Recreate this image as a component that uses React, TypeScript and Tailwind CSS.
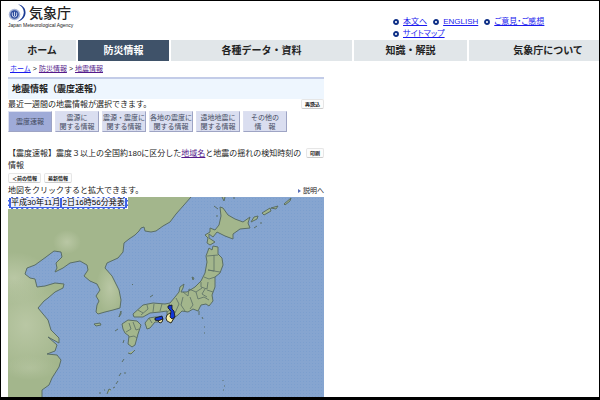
import type { ReactNode } from "react";

const LAND = "#a3b68c";
const COAST = "#5a6e66";

function TopLink({ children }: { children: ReactNode }) {
  return (
    <li className="flex items-center gap-1">
      <svg viewBox="0 0 6 6" className="size-[6px]" aria-hidden="true">
        <circle cx="3" cy="3" r="2" fill="#fff" stroke="#0e2f86" strokeWidth="1.9" />
      </svg>
      <a href="#top" className="text-[#1a1aee] underline">{children}</a>
    </li>
  );
}

function Logo() {
  return (
    <svg viewBox="0 0 18 18" className="size-[18px]" aria-hidden="true">
      <path d="M10 0.3C15.500 1.200 18.200 5.500 17.400 10C16.700 14 13.500 17 9 17.700C13 15.600 15.600 12.500 15.800 8.700C16 5.200 13.700 2 10 0.300Z" fill="#1b3a94" />
      <circle cx="6.500" cy="10.500" r="5.800" fill="#a9b6d8" />
      <circle cx="6.500" cy="10.500" r="4.200" fill="#2c4a9c" />
      <path d="M4.300 8.500V11Q4.300 13 6.500 13Q8.700 13 8.700 11V8.500M6.500 7.800V12" fill="none" stroke="#dfe6f5" strokeWidth="0.9" />
    </svg>
  );
}

const NAV = [
  { label: "ホーム", cls: "w-[68px] bg-[#e1e6e9] text-[#222]" },
  { label: "防災情報", cls: "w-[91px] bg-[#3f5269] text-white" },
  { label: "各種データ・資料", cls: "w-[181px] bg-[#e1e6e9] text-[#222]" },
  { label: "知識・解説", cls: "w-[113px] bg-[#e1e6e9] text-[#222]" },
  { label: "気象庁について", cls: "flex-1 pl-7 bg-[#e1e6e9] text-[#222]" },
];

const TABS = [
  ["震度速報"],
  ["震源に", "関する情報"],
  ["震源・震度に", "関する情報"],
  ["各地の震度に", "関する情報"],
  ["遠地地震に", "関する情報"],
  ["その他の", "情　報"],
];

function SmallButton({ children }: { children: ReactNode }) {
  return (
    <button
      type="button"
      className="flex h-[10px] shrink-0 items-center justify-center rounded-xs border border-[#e6e6e6] border-b-[#cccccc] bg-[#fcfcfc] px-[3px] text-[5px] leading-[6px] font-bold text-[#222]"
    >
      {children}
    </button>
  );
}

function QuakeMap() {
  return (
    <svg viewBox="8 197 316 200" className="block w-full" role="img" aria-label="震度速報の地図">
      <defs>
        <pattern id="sea" width="3" height="3" patternUnits="userSpaceOnUse">
          <rect width="3" height="3" fill="#86a5d0" />
          <rect width="1" height="1" fill="#7c9fce" />
        </pattern>
        <radialGradient id="plain">
          <stop offset="0" stopColor="#b9c7a4" />
          <stop offset="1" stopColor="#b9c7a4" stopOpacity="0" />
        </radialGradient>
        <clipPath id="mainland">
          <path d="M8 197H191L176 214 170 222 163 226 156 231 151 232 145 231 144 227 141 228 139 231 135 235 129 239 124 243 123 252 118 258 107 263 105 268 112 276 119 290 121 300 120 308 113 310 105 312 98 314 96 312 97 305 99 301 96 296 100 290 97 284 90 281 84 276 88 270 87 265 80 261 70 263 63 268 55 272 57 268 56 263 62 257 61 252 54 251 46 257 35 265 27 268 25 274 30 278 35 279 37 287 45 286 55 283 64 284 63 288 55 292 48 298 44 301 38 308 48 320 51 330 59 338 59 343 48 337 57 345 55 351 47 354 57 355 61 360 59 367 52 378 49 385 42 390 42 397H8Z" />
        </clipPath>
      </defs>
      <rect x="8" y="197" width="316" height="200" fill="url(#sea)" />
      <g clipPath="url(#mainland)">
        <rect x="8" y="197" width="190" height="200" fill={LAND} />
        <ellipse cx="14" cy="278" rx="36" ry="26" fill="url(#plain)" />
        <ellipse cx="26" cy="325" rx="44" ry="50" fill="url(#plain)" />
        <ellipse cx="67" cy="242" rx="14" ry="12" fill="url(#plain)" />
        <ellipse cx="110" cy="288" rx="14" ry="26" fill="url(#plain)" />
        <ellipse cx="30" cy="368" rx="28" ry="12" fill="url(#plain)" opacity=".6" />
      </g>
      <g fill="none" stroke={COAST} strokeWidth="1" strokeLinejoin="round">
        <path d="M191 197L176 214 170 222 163 226 156 231 151 232 145 231 144 227 141 228 139 231 135 235 129 239 124 243 123 252 118 258 107 263 105 268 112 276 119 290 121 300 120 308 113 310 105 312 98 314 96 312 97 305 99 301 96 296 100 290 97 284 90 281 84 276 88 270 87 265 80 261 70 263 63 268 55 272 57 268 56 263 62 257 61 252 54 251 46 257 35 265 27 268 25 274 30 278 35 279 37 287 45 286 55 283 64 284 63 288 55 292 48 298 44 301 38 308 48 320 51 330 59 338 59 343 48 337 57 345 55 351 47 354 57 355 61 360 59 367 52 378 49 385 42 390 42 397" />
      </g>
      <g fill={LAND} stroke={COAST} strokeWidth="1" strokeLinejoin="round">
        {/* Hokkaido and the northern islands */}
        <path d="M220 207L223 208 228 215 235 219 243 222 250 217 248 223 250 228 240 229 233 234 233 239 225 236 217 232 213 237 209 234 209 238 215 242 210 245 207 243 208 238 205 235 210 232 210 228 215 230 219 225 221 216Z" />
        <path d="M222 197L224 201 225 197M234 197V199M214 206L218 209M217 215V217" />
        <path d="M251 222L254 217 258 216 257 219ZM262 213L270 208 271 211 264 215ZM271 208L278 206 276 209ZM284 204L291 198 290 201 285 205ZM254 228L257 226M260 223H262" />
        {/* Honshu */}
        <path d="M209 248L212 250 213 246 218 247 218 254 222 258 223 265 220 273 215 277 215 287 212 295 213 301 209 306 206 304 201 305 198 311 193 309 188 312 182 311 178 315 175 317 171 323 167 320 167 311 160 312 150 313 143 317 134 317 133 314 143 305 153 303 165 304 170 303 175 297 179 292 180 287 184 284 183 288 181 292 187 292 195 287 201 281 205 273 207 262 206 256Z" />
        {/* Shikoku, Kyushu, Jeju, Sado, Tsushima */}
        <path d="M145 323L149 318 155 317 162 317 162 322 155 322 150 328 147 329Z" />
        <path d="M122 324L128 320 137 321 141 325 138 334 135 345 132 347 128 344 129 336 125 333 123 329Z" />
        <path d="M94 324L100 323 101 325 96 326ZM192 277L194 278 193 280ZM119 317L121 311 121 314ZM115 331L118 329M132 284L133 285M150 297L153 295" />
        <path d="M128 353L131 354 135 350M123 343L124 340M119 376L121 373M116 384L118 381M107 394L109 389 111 390M122 362L124 359M113 388L115 387M99 393H101M104 390H105M124 373H126" />
        <path d="M199 311V315M202 317L203 319M204 327H205M204 333H205M223 380V381M224 386H225M223 390H224" />
      </g>
      {/* prefecture borders */}
      <path
        d="M207 256L218 255M214 255V271L208 270 220 272M204 277L209 279 215 277M201 282V287L207 289 208 282M202 288L196 292 189 289 188 296 183 292M207 290L213 292M196 292L198 299 204 297 209 300M190 297L193 305 190 309M183 297L181 305 185 311M176 298L179 304 175 313M205 289L202 294 207 297M169 304L172 309 167 312M162 304L160 311M154 304L153 312M147 305L148 309 141 315M138 310L143 313M149 318L152 323M157 318L156 321M129 323L131 329 126 332M133 322L136 330 139 329M129 337L134 336 137 338"
        fill="none"
        stroke={COAST}
        strokeWidth="0.8"
      />
      {/* areas where shaking was observed */}
      <g stroke="#111" strokeWidth="0.8" strokeLinejoin="round">
        <path d="M167 315L170 313 174 318 171 323 167 321 166 318Z" fill="#f6eda6" />
        <path d="M168 306L172 305 172 309 174 311 175 317 172 319 170 317 171 311 168 308Z" fill="#1238d8" />
        <path d="M155 318L162 316 163 319 159 321 155 320Z" fill="#1238d8" />
        <path d="M158 321L163 319 162 322 160 323Z" fill="#f6eda6" />
      </g>
    </svg>
  );
}

export default function App() {
  return (
    <div className="h-screen overflow-hidden border border-b-[3px] border-black bg-white pl-[7px] font-['Liberation_Sans','Noto_Sans_CJK_JP',sans-serif] text-[8px] leading-3 text-[#222]">
      <header className="flex h-[39px] items-start">
        <div className="pt-[3px]">
          <div className="flex items-center gap-[3px]">
            <Logo />
            <h1 className="text-[14px] leading-[18px] font-medium">気象庁</h1>
          </div>
          <p className="text-[5px] leading-[6px]">Japan Meteorological Agency</p>
        </div>
        <ul className="mt-[15px] ml-auto flex w-[206px] flex-wrap gap-x-[6px] [font-feature-settings:'palt']">
          <TopLink>本文へ</TopLink>
          <TopLink>ENGLISH</TopLink>
          <TopLink>ご意見・ご感想</TopLink>
          <li className="w-full" aria-hidden="true" />
          <TopLink>サイトマップ</TopLink>
        </ul>
      </header>

      <nav className="flex gap-[2px]">
        {NAV.map((n) => (
          <a
            key={n.label}
            href="#nav"
            className={`flex h-[21px] items-center justify-center text-[10px] font-bold whitespace-nowrap ${n.cls}`}
          >
            {n.label}
          </a>
        ))}
      </nav>

      <main className="w-[316px]">
        <div className="flex h-4 items-center gap-[2px] pl-[2px] text-[7px]">
          <a href="#home" className="text-[#1a1aee] underline">ホーム</a>
          <span>&gt;</span>
          <a href="#bousai" className="text-[#551a8b] underline">防災情報</a>
          <span>&gt;</span>
          <a href="#jishin" className="text-[#551a8b] underline">地震情報</a>
        </div>

        <h2 className="h-[22px] border-t-2 border-[#c3cce8] bg-[#eef6fe] pl-1 text-[9px] leading-[21px] font-bold">
          地震情報（震度速報）
        </h2>

        <div className="flex h-3 items-start justify-between">
          <p>最近一週間の地震情報が選択できます。</p>
          <SmallButton>再読込</SmallButton>
        </div>

        <div className="flex gap-[3px]">
          {TABS.map((lines, i) => (
            <button
              key={lines.join("")}
              type="button"
              className={`flex h-[21px] w-[44px] flex-col items-center justify-center border border-t-[#dde0f0] border-r-[#9ea4c4] border-b-[#9ea4c4] border-l-[#dde0f0] text-[7px] leading-[9px] whitespace-nowrap text-[#444a60] ${
                i === 0 ? "bg-[#9fabd8]" : "bg-[#dadef0]"
              }`}
            >
              {lines.map((l) => (
                <span key={l}>{l}</span>
              ))}
            </button>
          ))}
        </div>

        <div className="flex items-start justify-between pt-4">
          <p>
            【震度速報】震度３以上の全国約180に区分した
            <a href="#area" className="text-[#551a8b] underline">地域名</a>
            <span>と地震の揺れの検知時刻の</span>
            <span className="block">情報</span>
          </p>
          <SmallButton>印刷</SmallButton>
        </div>

        <div className="flex gap-[3px] pt-px">
          <SmallButton>＜前の情報</SmallButton>
          <SmallButton>最新情報</SmallButton>
        </div>

        <div className="flex justify-between pt-[2px]">
          <p>地図をクリックすると拡大できます。</p>
          <a href="#help" className="flex items-center gap-[2px] text-[7px]">
            <svg viewBox="0 0 3 4" className="h-1 w-[3px]" aria-hidden="true">
              <path d="M0 0L3 2 0 4Z" fill="#5a6fb8" />
            </svg>
            説明へ
          </a>
        </div>

        <figure className="relative">
          <QuakeMap />
          <figcaption className="absolute top-0 left-0 border border-dashed border-white bg-[#3f62e6] px-[2px] leading-[10px] whitespace-pre text-black">
            <span className="bg-white/90">平成30年11月</span> <span className="bg-white/90">2日16時56分発表</span>
          </figcaption>
        </figure>
      </main>
    </div>
  );
}
